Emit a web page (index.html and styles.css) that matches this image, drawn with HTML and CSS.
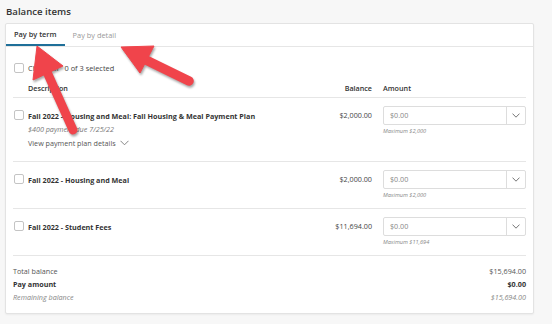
FILE: index.html
```html
<!DOCTYPE html>
<html>
<head>
<meta charset="utf-8">
<link rel="stylesheet" href="styles.css">
</head>
<body>
<div class="page">
  <h2 class="title">Balance items</h2>
  <div class="card">
    <div class="tabs">
      <div class="tab active">Pay by term</div>
      <div class="tab">Pay by detail</div>
    </div>
    <div class="content">
      <div class="check-row">
        <span class="cb"></span>
        <span class="check-label">Check all</span>
        <span class="selected">0 of 3 selected</span>
      </div>
      <div class="grid head">
        <span></span>
        <span>Description</span>
        <span class="bal">Balance</span>
        <span>Amount</span>
      </div>

      <div class="grid item">
        <span class="cb"></span>
        <div class="desc">
          <div class="name">Fall 2022 - Housing and Meal: Fall Housing &amp; Meal Payment Plan</div>
          <div class="note">$400 payment due 7/25/22</div>
          <div class="details">View payment plan details
            <svg class="chev" width="9" height="6" viewBox="0 0 9 6"><path d="M0.5 0.8 L4.5 4.8 L8.5 0.8" fill="none" stroke="#777" stroke-width="0.9"/></svg>
          </div>
        </div>
        <div class="bal amt">$2,000.00</div>
        <div class="amount">
          <div class="input"><span class="ph">$0.00</span><span class="btn"><svg width="8" height="5" viewBox="0 0 8 5"><path d="M0.5 0.6 L4 4.2 L7.5 0.6" fill="none" stroke="#666" stroke-width="0.9"/></svg></span></div>
          <div class="max">Maximum $2,000</div>
        </div>
      </div>

      <div class="grid item">
        <span class="cb"></span>
        <div class="desc">
          <div class="name">Fall 2022 - Housing and Meal</div>
        </div>
        <div class="bal amt">$2,000.00</div>
        <div class="amount">
          <div class="input"><span class="ph">$0.00</span><span class="btn"><svg width="8" height="5" viewBox="0 0 8 5"><path d="M0.5 0.6 L4 4.2 L7.5 0.6" fill="none" stroke="#666" stroke-width="0.9"/></svg></span></div>
          <div class="max">Maximum $2,000</div>
        </div>
      </div>

      <div class="grid item">
        <span class="cb"></span>
        <div class="desc">
          <div class="name">Fall 2022 - Student Fees</div>
        </div>
        <div class="bal amt">$11,694.00</div>
        <div class="amount">
          <div class="input"><span class="ph">$0.00</span><span class="btn"><svg width="8" height="5" viewBox="0 0 8 5"><path d="M0.5 0.6 L4 4.2 L7.5 0.6" fill="none" stroke="#666" stroke-width="0.9"/></svg></span></div>
          <div class="max">Maximum $11,694</div>
        </div>
      </div>

      <div class="summary">
        <div class="srow"><span>Total balance</span><span>$15,694.00</span></div>
        <div class="srow strong"><span>Pay amount</span><span>$0.00</span></div>
        <div class="srow muted"><span>Remaining balance</span><span>$15,694.00</span></div>
      </div>
    </div>
  </div>
</div>
<svg class="arrows" width="552" height="324" viewBox="0 0 552 324">
  <g fill="#f0444b" stroke="#f0444b" class="arrow">
    <line x1="73" y1="130" x2="47" y2="72" stroke-width="9" stroke-linecap="round"/>
    <polygon points="37,46 63,66 33,80" stroke-width="1" stroke-linejoin="round"/>
  </g>
  <g fill="#f0444b" stroke="#f0444b" class="arrow">
    <line x1="189" y1="81" x2="146" y2="60" stroke-width="9.5" stroke-linecap="round"/>
    <polygon points="121,47 154,46 140,73" stroke-width="1" stroke-linejoin="round"/>
  </g>
</svg>
</body>
</html>
```

FILE: styles.css
```css
* { box-sizing: border-box; }
html, body { margin: 0; padding: 0; }
body {
  background: #f7f7f7;
  font-family: "Open Sans", "Liberation Sans", sans-serif;
  color: #333;
  width: 552px;
  height: 324px;
  overflow: hidden;
  position: relative;
}
.page { padding: 0 18px 0 5px; }
.title {
  margin: 0;
  padding: 5px 0 0 1px;
  height: 23px;
  font-size: 9.6px;
  font-weight: 600;
  color: #333;
  line-height: 14px;
}
.card {
  background: #fff;
  border: 1px solid #e3e3e3;
  border-radius: 2px;
  box-shadow: 0 1px 2px rgba(0,0,0,0.05);
  height: 291px;
}
.tabs {
  display: flex;
  border-bottom: 1px solid #e6e6e6;
  height: 23px;
}
.tab {
  padding: 0 8px;
  font-size: 7.4px;
  line-height: 22px;
  color: #999;
}
.tab.active {
  color: #333;
  font-weight: 600;
  border-bottom: 2px solid #1f6f99;
  line-height: 20px;
  height: 22px;
}
.content { padding: 0 7px 0 7px; }
.check-row {
  display: flex;
  align-items: center;
  height: 12px;
  margin-top: 15px;
  font-size: 7.4px;
  color: #444;
}
.cb {
  display: inline-block;
  width: 10px;
  height: 10px;
  border: 1px solid #c4c4c4;
  border-radius: 2px;
  background: #fff;
  margin-left: 1px;
}
.check-label { margin-left: 4px; }
.selected { margin-left: 6px; }
.grid {
  display: grid;
  grid-template-columns: 15px 1fr 111px 143px;
  border-bottom: 1px solid #e6e6e6;
}
.head {
  margin-top: 5px;
  height: 19px;
  align-items: center;
  font-size: 7.2px;
  font-weight: 600;
  color: #333;
}
.bal { text-align: right; padding-right: 11px; }
.item {
  padding: 8px 0;
  align-items: start;
  font-size: 7.2px;
}
.item .cb { margin-top: 4px; }
.desc { line-height: 13px; padding-top: 4px; }
.name { font-weight: 700; color: #333; }
.note { font-style: italic; color: #777; }
.details { color: #555; line-height: 14px; padding-bottom: 3px; display: flex; align-items: center; }
.chev { margin-left: 4px; }
.amt { line-height: 13px; padding-top: 3px; color: #444; }
.input {
  display: flex;
  height: 19px;
  border: 1px solid #ddd;
  border-radius: 2px;
  background: #fff;
}
.ph { flex: 1; padding-left: 6px; line-height: 17px; color: #888; font-size: 7.2px; }
.btn {
  width: 19px;
  border-left: 1px solid #ddd;
  display: flex;
  align-items: center;
  justify-content: center;
}
.max {
  margin-top: 2px;
  font-size: 5.6px;
  font-style: italic;
  color: #888;
  line-height: 9px;
}
.summary { padding-top: 9px; }
.srow {
  display: flex;
  justify-content: space-between;
  font-size: 7.2px;
  line-height: 13px;
  color: #555;
}
.srow.strong { font-weight: 700; color: #333; }
.srow.muted { font-style: italic; color: #888; }
.arrows {
  position: absolute;
  left: 0;
  top: 0;
  pointer-events: none;
}
.arrow { filter: drop-shadow(1px 2px 1px rgba(0,0,0,0.35)); }
```
